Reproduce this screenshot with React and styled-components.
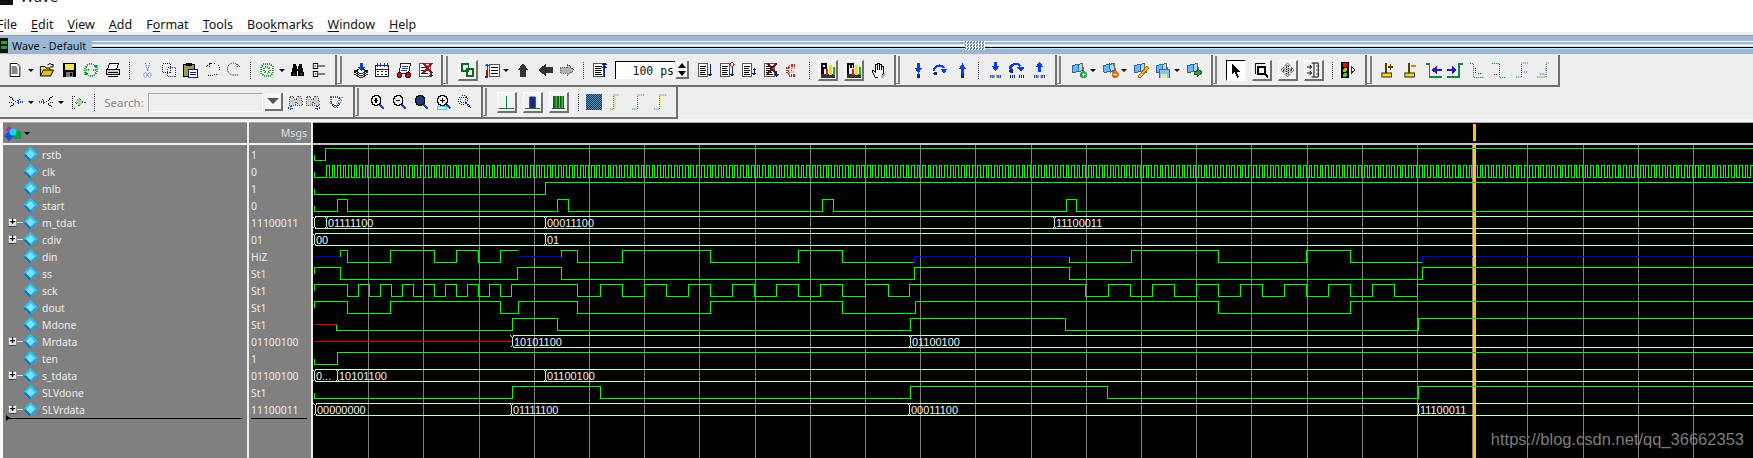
import React from 'react';
import styled, { createGlobalStyle } from 'styled-components';

const UI_FONT = '"Noto Sans", "Liberation Sans", sans-serif';

const GlobalStyle = createGlobalStyle`
  html, body {
    margin: 0;
    padding: 0;
    background: #fff;
    overflow: hidden;
  }
`;

const Page = styled.div`
  width: 1753px;
  height: 458px;
  overflow: hidden;
  display: flex;
  flex-direction: column;
  background: #fff;
  font-family: ${UI_FONT};
`;

const TitleBar = styled.div`
  height: 5px;
  flex: none;
  overflow: hidden;
  display: flex;
  align-items: flex-end;
  gap: 7px;
  font-size: 15px;
  line-height: 15px;
  color: #222;
`;

const TitleText = styled.span`
  margin-bottom: 1px;
`;

const MenuBar = styled.div`
  height: 27px;
  flex: none;
  display: flex;
  align-items: center;
  gap: 14px;
  margin-left: -3px;
  padding-top: 11px;
  box-sizing: border-box;
  font-size: 12.5px;
  color: #111;
  u { text-underline-offset: 2px; }
`;

const DockTitle = styled.div`
  height: 23px;
  flex: none;
  box-sizing: border-box;
  display: flex;
  align-items: center;
  position: relative;
  border-top: 3px solid #eeeeee;
  border-bottom: 1px solid #e8e8e8;
  background: #9ab8d6;
  font-size: 10.9px;
  color: #111;
  gap: 4px;
  box-shadow: inset 0 1px 0 #a0a0a0;
  padding-top: 1px;
`;

const Stripes = styled.div`
  flex: 1;
  height: 9px;
  margin-left: 2px;
  background: linear-gradient(
    to bottom,
    #fff 0 1px,
    #9ab8d6 1px 3px,
    #c6e2f4 3px 4px,
    #fff 4px 5px,
    #c6e2f4 5px 6px,
    #000 6px 7px,
    #c6e2f4 7px 8px,
    #9ab8d6 8px 9px
  );
`;

const DockHandle = styled.div`
  position: absolute;
  left: 965px;
  top: 6px;
  width: 20px;
  height: 9px;
  background: repeating-conic-gradient(#fff 0 25%, #5f7ea0 0 50%) 0 0 / 3px 3px;
`;

const ToolRow = styled.div`
  height: 32px;
  flex: none;
  display: flex;
  background: #eeeeee;
`;

const ToolGroup = styled.div`
  width: ${p => p.$width}px;
  height: 32px;
  flex: none;
  box-sizing: border-box;
  display: flex;
  align-items: center;
  border-right: 2px solid #707070;
  border-bottom: 2px solid #707070;
`;

const Slot = styled.div`
  flex: none;
  width: ${p => p.$w}px;
  margin-left: ${p => p.$ml}px;
  display: flex;
  align-items: center;
  justify-content: center;
  svg { display: block; }
`;

const RaisedBtn = styled.div`
  flex: none;
  width: 100%;
  height: 21px;
  box-sizing: border-box;
  display: flex;
  align-items: center;
  justify-content: center;
  background: ${p => (p.$on ? '#fff' : '#f2f2f2')};
  border-style: solid;
  border-width: 1px 2px 2px 1px;
  border-color: ${p => (p.$on ? '#000 #f8f8f8 #f8f8f8 #000' : '#fff #707070 #707070 #fff')};
`;

const Grip = styled.div`
  width: 2px;
  height: 28px;
  background: #808080;
  position: relative;
  &::after {
    content: '';
    position: absolute;
    left: -3px;
    bottom: 0;
    width: 3px;
    height: 1px;
    background: #808080;
  }
`;

const Sep = styled.div`
  width: 1px;
  height: 17px;
  background: repeating-linear-gradient(to bottom, #333 0 1px, transparent 1px 2px);
`;

const TimeInput = styled.div`
  width: 100%;
  height: 18px;
  box-sizing: border-box;
  background: #fff;
  border-top: 1px solid #000;
  border-left: 1px solid #000;
  font-family: "DejaVu Sans Mono", "Liberation Mono", monospace;
  font-size: 11.5px;
  line-height: 18px;
  text-align: right;
  padding-right: 1px;
  color: #111;
  white-space: pre;
`;

const Spin = styled.div`
  width: 100%;
  height: 18px;
  box-sizing: border-box;
  display: flex;
  flex-direction: column;
  border-right: 2px solid #707070;
  border-bottom: 2px solid #707070;
  background: #f4f4f4;
`;

const SpinPart = styled.div`
  flex: 1;
  display: flex;
  align-items: center;
  justify-content: center;
  &::before {
    content: '';
    border-left: 4px solid transparent;
    border-right: 4px solid transparent;
    ${p => (p.$up ? 'border-bottom: 5px solid #000;' : 'border-top: 5px solid #000;')}
  }
`;

const MiniArrow = styled.div`
  width: 0;
  height: 0;
  border-left: 3px solid transparent;
  border-right: 3px solid transparent;
  border-top: 3px solid ${p => p.$color || '#000'};
`;

const SearchLabel = styled.span`
  font-size: 11.5px;
  color: #8a8a8a;
  white-space: nowrap;
`;

const SearchBox = styled.div`
  width: 100%;
  height: 19px;
  box-sizing: border-box;
  background: #eeeeee;
  border: 1px solid #a8a8a8;
  border-right-color: #fff;
  border-bottom-color: #fff;
`;

const SearchDrop = styled.div`
  width: 100%;
  height: 18px;
  box-sizing: border-box;
  display: flex;
  align-items: center;
  justify-content: center;
  border-right: 2px solid #707070;
  border-bottom: 2px solid #707070;
  background: #f4f4f4;
  &::before {
    content: '';
    border-left: 6px solid transparent;
    border-right: 6px solid transparent;
    border-top: 6px solid #555;
  }
`;

const WhiteGap = styled.div`
  height: 3px;
  flex: none;
  background: #f4f4f4;
`;

const Panes = styled.div`
  flex: 1;
  min-height: 0;
  display: flex;
  padding-left: 3px;
  position: relative;
`;

const SignalPane = styled.div`
  flex: none;
  width: ${p => p.$width}px;
  display: flex;
  flex-direction: column;
  background: #808080;
  border-top: 1px solid #a8a8a8;
  box-sizing: border-box;
`;

const PaneHeader = styled.div`
  height: 20px;
  flex: none;
  display: flex;
  align-items: center;
  border-bottom: 2px solid #f2f2f2;
  box-sizing: content-box;
  color: #e0e0e0;
  font-size: 10.6px;
  justify-content: ${p => (p.$right ? 'flex-end' : 'flex-start')};
  padding: ${p => (p.$right ? '0 4px 0 0' : '0 0 0 1px')};
  gap: 3px;
`;

const RowList = styled.div`
  display: flex;
  flex-direction: column;
  padding-top: 1px;
`;

const SignalRow = styled.div`
  height: 17px;
  flex: none;
  display: flex;
  align-items: center;
  position: relative;
  font-size: 10.4px;
  color: #ececec;
  white-space: nowrap;
  padding-left: ${p => p.$pad || 0}px;
`;

const Expander = styled.div`
  position: absolute;
  left: 5px;
  top: 4px;
  width: 9px;
  height: 9px;
  box-sizing: border-box;
  background: linear-gradient(#fff, #cfd8ea);
  border: 1px solid #8d8d8d;
  border-bottom-color: #444;
  color: #000;
  font: bold 10px/7px "Liberation Mono", monospace;
  text-align: center;
  &::after {
    content: '';
    position: absolute;
    left: 8px;
    top: 3px;
    width: 6px;
    height: 1px;
    background: #ddd;
  }
`;

const NameText = styled.span`
  margin-left: 4px;
`;

const EndLine = styled.div`
  height: 1px;
  margin: ${p => (p.$name ? '0 5px 0 4px' : '0 4px 0 2px')};
  background: #000;
  position: relative;
  ${p => p.$name && `
    &::before {
      content: '';
      position: absolute;
      left: -1px;
      top: -3px;
      border-top: 3px solid transparent;
      border-bottom: 3px solid transparent;
      border-left: 4px solid #000;
    }
  `}
`;

const Sash = styled.div`
  flex: none;
  width: 2px;
  background: #ececec;
`;

const WaveColumn = styled.div`
  flex: 1;
  min-width: 0;
  display: flex;
  flex-direction: column;
  background: #000;
  position: relative;
`;

const WaveHeader = styled.div`
  height: 20px;
  flex: none;
  box-sizing: content-box;
  border-top: 1px solid #a8a8a8;
  border-bottom: 2px solid #c4c4c4;
  background: #000;
`;

const HeaderCursor = styled.div`
  position: absolute;
  left: 1160px;
  top: 2px;
  width: 3px;
  height: 17px;
  background: #ffc800;
`;

const Watermark = styled.div`
  position: absolute;
  right: 9px;
  bottom: 9px;
  font-family: "Liberation Sans", Arial, sans-serif;
  font-size: 16.5px;
  line-height: 20px;
  color: #7c7c7c;
`;

/* ---------- icons ---------- */

const D = { fill: 'none', strokeDasharray: '1 1' };
const listBox = (
  <>
    <rect x="1.5" y="1.5" width="9" height="13" fill="#fff" stroke="#555" />
    <path d="M3 4h6M3 6h5M3 8h6M3 10h5M3 12h6" stroke="#000" />
  </>
);
const Lens = ({ fill = 'none', glyph }) => (
  <>
    <path d="M9.5 9.5l5 5" stroke="#1a3fd0" strokeWidth="2.4" />
    <circle cx="6.5" cy="6.5" r="5" fill={fill} stroke="#000" strokeWidth="1.4" />
    {glyph}
  </>
);
const arrowDown = (c = '#0a3cf0') => <path d="M6 1h4v5h3l-5 6-5-6h3z" fill={c} />;
const arrowUp = (c = '#0a3cf0') => <path d="M8 1l5 6h-3v5H6V7H3z" fill={c} />;
const curve = (
  <>
    <path d="M2 9a5.5 5.5 0 0 1 10-3" fill="none" stroke="#0a3cf0" strokeWidth="2.4" />
    <path d="M8.5 7h7l-3.5 5z" fill="#0a3cf0" />
    <circle cx="3.5" cy="11.5" r="2" fill="#0a2a90" />
  </>
);
const bars = <path d="M2 13v3M4 13v3M6 13v3M10 13v3M12 13v3M14 13v3" stroke="#0a2a90" />;
const flag = (
  <>
    <path d="M1 4l6-2 1 7-6 2z" fill="#6fb4e8" stroke="#2a6aa8" />
    <path d="M7 3l4-2 1 7-4 2z" fill="#a9d8f4" stroke="#2a6aa8" />
    <path d="M11 1l2 10" stroke="#8a6a20" strokeWidth="1.4" />
  </>
);
const dotStep = (d, arrow) => (
  <>
    <path d={d} {...D} stroke="#0a8a30" />
    <path d={arrow} {...D} stroke="#3a10d0" />
  </>
);
const barChart = letter => (
  <>
    <rect x="1" y="12" width="16" height="4" fill="#333" />
    <rect x="6" y="7" width="3" height="6" fill="#e02020" />
    <rect x="10" y="3" width="3" height="10" fill="#f0e000" />
    <rect x="14" y="5" width="3" height="8" fill="#20b020" />
    {letter}
  </>
);
const waveBtn = (d, c, fill) => <path d={d} fill={fill || 'none'} stroke={c} />;

const icons = {
  doc: <><path d="M2.5 1.5h8l3 3v10h-11z" fill="#fff" stroke="#000" /><path d="M4 5h6M4 7h7M4 9h7M4 11h7" stroke="#000" /></>,
  open: <><path d="M1.5 14V4.5h5l1 1.5h4v2" fill="#f8e070" stroke="#000" /><path d="M1.5 14l3-6h11l-3 6z" fill="#e0c020" stroke="#000" /><path d="M9 3q3-3 5 0l1-1v3h-3" fill="none" stroke="#000" /></>,
  save: <><rect x="1" y="1" width="14" height="14" fill="#000" /><rect x="3" y="2" width="10" height="6" fill="#f0e060" /><rect x="4" y="10" width="8" height="5" fill="#777" /><rect x="9" y="11" width="2" height="3" fill="#000" /></>,
  reload: <><path d="M2 7a6 6 0 0 1 11-2l1-2v5h-5" {...D} stroke="#1a9a30" strokeWidth="2" /><path d="M14 9a6 6 0 0 1-11 2l-1 2V8h5" {...D} stroke="#1a9a30" strokeWidth="2" /></>,
  print: <><path d="M4.5 1.5h9l-2 6h-9z" fill="#fff" stroke="#000" /><path d="M1.5 7.5h13v5h-13z" fill="#ccc" stroke="#000" /><path d="M3 14.5h10M3 10h10" stroke="#000" /></>,
  cut: <><path d="M5 1l3 8M11 1L8 9" {...D} stroke="#2040c0" /><circle cx="5" cy="13" r="2.4" {...D} stroke="#2040c0" /><circle cx="11" cy="13" r="2.4" {...D} stroke="#2040c0" /></>,
  copy: <><rect x="1.5" y="1.5" width="8" height="9" {...D} stroke="#222" /><rect x="6.5" y="5.5" width="8" height="9" {...D} stroke="#2040c0" /></>,
  paste: <><rect x="1.5" y="2.5" width="11" height="12" fill="#9a9a50" stroke="#000" /><rect x="4" y="1" width="6" height="3" fill="#000" /><rect x="6.5" y="7.5" width="9" height="8" fill="#fff" stroke="#0a1a80" /><path d="M8 10h6M8 12h6" stroke="#0a1a80" /></>,
  undo: <><path d="M4 3a6 6 0 1 1 5 10H2" {...D} stroke="#111" /><path d="M1 5l3-3v4" {...D} stroke="#111" /></>,
  redo: <><path d="M12 3a6 6 0 1 0-5 10h7" {...D} stroke="#111" /><path d="M15 5l-3-3v4" {...D} stroke="#111" /></>,
  ring: <><circle cx="8" cy="8" r="6.5" {...D} stroke="#30a040" strokeWidth="2" /><circle cx="8" cy="8" r="3" {...D} stroke="#30a040" strokeWidth="2" /></>,
  binoc: <><path d="M3 2h3v2h1v3h2V4h1V2h3v3l2 7v2h-6V9H7v5H1v-2l2-7z" fill="#000" /><path d="M3 12h2M11 12h2" stroke="#88a" /></>,
  tree: <><rect x="1.5" y="1.5" width="5" height="5" fill="#fff" stroke="#000" /><rect x="1.5" y="9.5" width="5" height="5" fill="#fff" stroke="#000" /><path d="M3 4h2M3 12h2M7 4h8M7 12h8" stroke="#000" /></>,
  stack: <><path d="M1 10l7-4 7 4-7 4z" fill="#fff" stroke="#222" /><path d="M1 12l7 4 7-4M1 8l7 4 7-4" fill="none" stroke="#222" /><path d="M6.5 1h3v4H12l-4 4-4-4h2.5z" fill="#1040c0" /></>,
  table: <><rect x="1.5" y="3.5" width="13" height="11" fill="#fff" stroke="#222" /><path d="M1 7h14" stroke="#222" /><path d="M3 1v4M6 1v4M10 1v4M13 1v4" stroke="#1040c0" /><path d="M3 9h2M7 9h2M11 9h2M3 12h2M7 12h2M11 12h2" stroke="#222" /></>,
  scroll: <><path d="M4.5 1.5h10l-2 10h-9z" fill="#fff" stroke="#222" /><path d="M6 4h6M6 6h6M5 8h6" stroke="#2040c0" /><circle cx="3.5" cy="13" r="2.5" fill="#d01010" stroke="#000" /><circle cx="12" cy="13" r="2.5" fill="#d01010" stroke="#000" /></>,
  docX: <><rect x="1.5" y="1.5" width="11" height="13" fill="#fff" stroke="#555" /><path d="M3 5h7M3 8h7M3 11h7" stroke="#222" /><path d="M5 1l9 10M14 1L5 11" stroke="#a01010" strokeWidth="2" /><path d="M13 9v6M11 13l2 2 2-2" stroke="#1030b0" fill="none" /></>,
  chain: <><rect x="2" y="2" width="7" height="7" fill="none" stroke="#0a6a20" strokeWidth="2" /><rect x="7" y="7" width="7" height="7" fill="none" stroke="#0a6a20" strokeWidth="2" /></>,
  listUpDown: <><rect x="5.5" y="2.5" width="10" height="12" fill="#fff" stroke="#555" /><path d="M7 5h7M7 8h7M7 11h7" stroke="#000" /><path d="M3 1l2 3H1z" fill="#1040e0" /><path d="M3 4v4" stroke="#1040e0" /><path d="M3 8v7H1" fill="none" stroke="#a01010" strokeWidth="1.6" /></>,
  up: <path d="M8 1l6 7h-3v7H5V8H2z" fill="#333" />,
  left: <path d="M1 8l7-6v3h7v6H8v3z" fill="#333" />,
  rightD: <><path d="M15 8L8 2v3H1v6h7v3z" fill="#b0b0b0" /><path d="M15 8L8 2v3H1v6h7v3z" {...D} stroke="#666" /></>,
  listFork: <>{listBox}<path d="M12 1v14" stroke="#0a1a80" /><path d="M10 3l2-2 2 2M10 6l2-2 2 2" fill="#0a1a80" stroke="#0a1a80" /></>,
  listDown: <>{listBox}<path d="M13 2v11" stroke="#0a1a80" /><path d="M10.5 12h5l-2.5 3z" fill="#0a1a80" /></>,
  listDiamond: <>{listBox}<path d="M13 5v8" stroke="#0a1a80" /><path d="M10.5 12h5l-2.5 3z" fill="#0a1a80" /><path d="M13 0l2 2.5-2 2.5-2-2.5z" fill="#fff" stroke="#d02020" /></>,
  listSmall: <>{listBox}<path d="M13 6v5" stroke="#0a1a80" /><path d="M11 7l2 2 2-2M10.5 11h5l-2.5 3z" fill="#0a1a80" /></>,
  listX: <>{listBox}<path d="M4 1l9 11M13 1L4 12" stroke="#701010" strokeWidth="1.8" /><path d="M13 9v4" stroke="#0a1a80" /><path d="M10.5 12h5l-2.5 3z" fill="#0a1a80" /></>,
  redC: <><path d="M12 3H6L3 6v4l3 3h6" fill="none" stroke="#d02020" strokeWidth="3" strokeDasharray="1 1" /><path d="M12 6H8v4h4" fill="none" stroke="#d02020" strokeDasharray="1 1" /></>,
  pChart: barChart(<path d="M1 1h6v6H4v5H1zM3 3v2h2V3z" fill="#000" fillRule="evenodd" />),
  mChart: barChart(<path d="M1 1h8v5H7V3H6v3H4V3H3v9H1z" fill="#000" />),
  hand: <><path d="M5 15L2 9l1-1 2 2V2h2v6-7h2v7-6h2v6-4h2v8l-2 5z" fill="#fff" stroke="#000" /><path d="M10 15l5-5v3l-3 3z" fill="#aab" /></>,
  stepDown: <>{arrowDown()}<circle cx="8" cy="14" r="2" fill="#0a2a90" /></>,
  stepOver: curve,
  stepUp: <>{arrowUp()}<circle cx="8" cy="14" r="2" fill="#0a2a90" /></>,
  stepDownBars: <><path d="M6 0h4v4h3L8 9 3 4h3z" fill="#0a3cf0" />{bars}</>,
  stepOverBars: <><path d="M2 7a5 5 0 0 1 9-3" fill="none" stroke="#0a3cf0" strokeWidth="2.4" /><path d="M8 5h7l-3.5 5z" fill="#0a3cf0" /><circle cx="3" cy="9" r="2" fill="#0a2a90" />{bars}</>,
  stepUpBars: <><path d="M8 0l5 5h-3v5H6V5H3z" fill="#0a3cf0" />{bars}</>,
  flagPlus: <>{flag}<circle cx="12.5" cy="12.5" r="3.5" fill="#30a040" /><path d="M10.5 12.5h4M12.5 10.5v4" stroke="#fff" /></>,
  flagMinus: <>{flag}<circle cx="12.5" cy="12.5" r="3.5" fill="#e07020" /><path d="M10.5 12.5h4" stroke="#fff" /></>,
  flagEdit: <>{flag}<path d="M14 4l2 2-8 9-3 1 1-3z" fill="#e8c060" stroke="#a87010" /></>,
  flagSave: <>{flag}<rect x="4" y="7" width="10" height="9" fill="#8ac0f0" stroke="#2a6aa8" /><rect x="6" y="12" width="6" height="4" fill="#d8f0a0" /></>,
  flagGo: <>{flag}<path d="M8 9h3V6l5 4.5-5 4.5v-3H8z" fill="#40a040" stroke="#206020" /></>,
  pointer: <path d="M4 1v12l3-3 3 6 2-1-3-5h4z" fill="#000" />,
  boxZoom: <><path d="M1.5 12V1.5H12" fill="none" stroke="#000" /><rect x="4.5" y="4.5" width="7" height="7" fill="none" stroke="#000" strokeWidth="2" /><path d="M10 11l5 4" stroke="#000" strokeWidth="2" /></>,
  move: <path d="M8 1l3 3H5zM8 15l-3-3h6zM1 8l3-3v6zM15 8l-3 3V5zM7 4h2v8H7zM4 7h8v2H4z" {...D} stroke="#111" />,
  gridArrows: <><path d="M8.5 1v14M6 1h7v14H6" fill="none" stroke="#000" /><path d="M1 5h5M1 11h5M4 3l2 2-2 2M4 9l2 2-2 2" fill="none" stroke="#000" /><path d="M11 4h3M11 8h3M11 12h3" stroke="#000" strokeDasharray="1 1" /></>,
  traffic: <><rect x="0" y="0" width="8" height="16" fill="#000" /><circle cx="4" cy="3" r="2.5" fill="#f00" /><circle cx="4" cy="8" r="2" fill="#d8b000" /><circle cx="4" cy="13" r="2" fill="#40d040" /><path d="M10 4.5l4 3.5-4 3.5z" fill="#fff" stroke="#333" /></>,
  cursorAdd: <><path d="M6 1v10" stroke="#5a4000" strokeWidth="2" /><rect x="1" y="11" width="11" height="4" fill="#ffd800" stroke="#222" /><path d="M8 5h6M11 2v6" stroke="#5a4000" strokeWidth="1.4" /></>,
  cursorDel: <><path d="M6 1v10" stroke="#5a4000" strokeWidth="2" /><rect x="1" y="11" width="11" height="4" fill="#ffd800" stroke="#222" /><path d="M8 4h6" stroke="#c89000" strokeWidth="2" /></>,
  edgeLeft: <><path d="M1 2h3v13h12" fill="none" stroke="#0a8a40" strokeWidth="1.4" /><path d="M6 8l5-4v3h5v2h-5v3z" fill="#3a10d0" /></>,
  edgeRight: <><path d="M0 15h12V2h4" fill="none" stroke="#0a8a40" strokeWidth="1.4" /><path d="M10 8L5 4v3H0v2h5v3z" fill="#3a10d0" /></>,
  dotFall1: dotStep('M1 1h3v14h11', 'M6 6v6M9 11l3 1'),
  dotFall2: dotStep('M1 1h7v14h7', 'M8 6v4M3 12h4'),
  dotRise1: dotStep('M15 1H8v14H1', 'M8 6v5M11 10h3'),
  dotRise2: dotStep('M15 1h-3v14H1', 'M12 6v4M5 12h5'),
  findPrev: <><path d="M1 2l7 6-7 6M1 8h4" {...D} stroke="#111" /><path d="M15 8H9M12 5L9 8l3 3" {...D} stroke="#1040e0" strokeWidth="1.4" /></>,
  findNext: <><path d="M1 8h6M4 5l3 3-3 3" {...D} stroke="#1040e0" strokeWidth="1.4" /><path d="M15 2L8 8l7 6M15 8h-4" {...D} stroke="#111" /></>,
  findDiff: <><path d="M2 2h4M2 14h4M2 8h2M2 2v12" {...D} stroke="#111" /><path d="M9 4l4 4-4 4-4-4z" fill="#a8d8a0" strokeDasharray="1 1" stroke="#1a8a30" /><path d="M14 8h2" stroke="#1040e0" /></>,
  searchPrev: <><path d="M3 2h3l1 3h2l1-3h3l2 9h-5V8H8v3H2z" fill="#b8b8b8" fillOpacity="0.6" strokeDasharray="1 1" stroke="#555" /><path d="M1 14l3-2v4zM3 14h4" {...D} stroke="#1040e0" /></>,
  searchNext: <><path d="M3 2h3l1 3h2l1-3h3l2 9h-5V8H8v3H2z" fill="#b8b8b8" fillOpacity="0.6" strokeDasharray="1 1" stroke="#555" /><path d="M15 14l-3-2v4zM13 14H9" {...D} stroke="#1040e0" /></>,
  searchOpt: <><path d="M3 3h6l5 3-6 8-5-5z" {...D} stroke="#555" strokeWidth="2" /><path d="M14 3L6 14" {...D} stroke="#6a98e0" strokeWidth="2" /></>,
  zoomIn: <Lens glyph={<path d="M4 6.5h5M6.5 4v5" stroke="#000" strokeWidth="1.4" />} />,
  zoomOut: <Lens glyph={<path d="M4 6.5h5" stroke="#000" strokeWidth="1.4" />} />,
  zoomFull: <Lens fill="#123f78" />,
  zoomCursor: <><Lens glyph={<path d="M4 6.5h5M6.5 4v5" stroke="#000" strokeWidth="1.4" />} /><rect x="1" y="12.5" width="9" height="3" fill="none" stroke="#40d0e0" /></>,
  zoomDotted: <><circle cx="6" cy="6" r="4.5" {...D} stroke="#111" /><rect x="3.5" y="3.5" width="5" height="5" {...D} stroke="#1040c0" /><path d="M9 9l5 5" {...D} stroke="#1040e0" strokeWidth="2" /></>,
  waveLine: waveBtn('M0 14.5h16M8 2v12', '#0a7a30'),
  wavePulse: <><path d="M0 14.5h16" stroke="#0a7a30" /><path d="M5 14V3h6v11" fill="#1a2a8a" stroke="#1a2a8a" /></>,
  waveBlock: <><path d="M1 14.5h14" stroke="#063" /><path d="M2 14V2h12v12z" fill="#0a6a10" /><path d="M5.5 2v12M9 2v12M12 2v12" stroke="#7ac080" /></>,
  dither: (
    <>
      <defs>
        <pattern id="dither" width="2" height="2" patternUnits="userSpaceOnUse">
          <rect width="2" height="2" fill="#1a2a90" />
          <rect width="1" height="1" fill="#50a080" />
          <rect x="1" y="1" width="1" height="1" fill="#50a080" />
        </pattern>
      </defs>
      <rect width="16" height="16" fill="url(#dither)" />
    </>
  ),
  dotYellow: <><path d="M1 15h4V1h6" {...D} stroke="#0a8a30" /><path d="M5.5 1v14M7 1v14" stroke="#f0e000" strokeDasharray="1 1" /></>,
  dotGreen: <path d="M1 15h6V1h7" {...D} stroke="#0a8a30" />,
  dotYellow2: <><path d="M1 15h6V1h7" {...D} stroke="#0a8a30" /><path d="M7.5 2v12" stroke="#f0e000" strokeDasharray="2 1" /></>,
};

const Icon = ({ name, w, h = 16 }) => (
  <svg width={w} height={h} viewBox="0 0 16 16" preserveAspectRatio="none" shapeRendering="crispEdges">
    {icons[name]}
  </svg>
);

const renderItem = (it) => {
  const [kind, , w, arg] = it;
  switch (kind) {
    case 'grip': return <Grip />;
    case 'sep': return <Sep />;
    case 'drop': return <MiniArrow />;
    case 'time': return <TimeInput>100 ps</TimeInput>;
    case 'spin': return <Spin><SpinPart $up /><SpinPart /></Spin>;
    case 'label': return <SearchLabel>{arg}</SearchLabel>;
    case 'input': return <SearchBox />;
    case 'combo': return <SearchDrop />;
    case 'btn': return <RaisedBtn><Icon name={arg} w={w - 5} h={16} /></RaisedBtn>;
    case 'on': return <RaisedBtn $on><Icon name={arg} w={w - 5} h={16} /></RaisedBtn>;
    default: return <Icon name={kind} w={w} />;
  }
};

// [kind, left x on the toolbar, width, extra]
const toolRows = [
  [
    { end: 337, items: [
      ['doc', 8, 14], ['drop', 28, 6], ['open', 39, 15], ['save', 62, 15], ['reload', 83, 16], ['print', 105, 16],
      ['sep', 129, 1], ['cut', 142, 11], ['copy', 161, 16], ['paste', 182, 16], ['undo', 205, 16], ['redo', 226, 15],
      ['sep', 250, 1], ['ring', 259, 16], ['drop', 279, 6], ['binoc', 290, 15], ['tree', 312, 14],
    ] },
    { end: 443, items: [
      ['grip', 340, 2], ['stack', 353, 16], ['table', 374, 16], ['scroll', 396, 16], ['docX', 418, 16],
    ] },
    { end: 896, items: [
      ['grip', 446, 2], ['btn', 458, 20, 'chain'], ['listUpDown', 484, 16], ['drop', 503, 6], ['up', 516, 14], ['left', 537, 17], ['rightD', 559, 16],
      ['sep', 583, 1], ['listFork', 592, 17], ['time', 615, 60], ['spin', 676, 13],
      ['listDown', 697, 16], ['listDiamond', 719, 16], ['listSmall', 741, 16], ['listX', 763, 17], ['redC', 785, 13],
      ['sep', 809, 1], ['btn', 818, 20, 'pChart'], ['btn', 844, 20, 'mChart'], ['hand', 870, 16],
    ] },
    { end: 1057, items: [
      ['grip', 898, 2], ['stepDown', 913, 11], ['stepOver', 932, 16], ['stepUp', 957, 11], ['sep', 978, 1],
      ['stepDownBars', 989, 13], ['stepOverBars', 1008, 18], ['stepUpBars', 1033, 13],
    ] },
    { end: 1213, items: [
      ['grip', 1059, 2], ['flagPlus', 1071, 16], ['drop', 1090, 6], ['flagMinus', 1102, 17], ['drop', 1121, 6],
      ['flagEdit', 1133, 16], ['flagSave', 1155, 16], ['drop', 1174, 6], ['flagGo', 1186, 16],
    ] },
    { end: 1367, items: [
      ['grip', 1215, 2], ['on', 1226, 20, 'pointer'], ['btn', 1252, 20, 'boxZoom'], ['btn', 1278, 20, 'move'], ['btn', 1304, 20, 'gridArrows'],
      ['sep', 1332, 1], ['traffic', 1341, 16],
    ] },
    { end: 1560, items: [
      ['grip', 1370, 2], ['cursorAdd', 1381, 14], ['cursorDel', 1404, 14], ['edgeLeft', 1425, 17], ['edgeRight', 1447, 16],
      ['dotFall1', 1469, 16], ['dotFall2', 1491, 16], ['dotRise1', 1514, 15], ['dotRise2', 1535, 15],
    ] },
  ],
  [
    { end: 355, items: [
      ['findPrev', 8, 16], ['drop', 28, 6], ['findNext', 38, 16], ['drop', 58, 6], ['findDiff', 70, 16], ['sep', 94, 1],
      ['label', 105, 38, 'Search:'], ['input', 148, 115], ['combo', 265, 18], ['searchPrev', 287, 17], ['searchNext', 304, 17], ['searchOpt', 328, 16],
    ] },
    { end: 483, items: [
      ['grip', 357, 2], ['zoomIn', 370, 15], ['zoomOut', 392, 15], ['zoomFull', 414, 15], ['zoomCursor', 436, 16], ['zoomDotted', 457, 16],
    ] },
    { end: 678, items: [
      ['grip', 485, 2], ['btn', 497, 20, 'waveLine'], ['btn', 523, 20, 'wavePulse'], ['btn', 549, 20, 'waveBlock'], ['sep', 578, 1],
      ['dither', 586, 16], ['dotYellow', 609, 15], ['dotGreen', 631, 15], ['dotYellow2', 653, 15],
    ] },
  ],
];

const ToolBars = () => toolRows.map((groups, r) => {
  let start = 0;
  return (
    <ToolRow key={r}>
      {groups.map((g) => {
        let cursor = start;
        const width = g.end - start;
        start = g.end;
        return (
          <ToolGroup key={g.end} $width={width}>
            {g.items.map((it, i) => {
              const ml = it[1] - cursor;
              cursor = it[1] + it[2];
              return <Slot key={i} $w={it[2]} $ml={ml}>{renderItem(it)}</Slot>;
            })}
          </ToolGroup>
        );
      })}
    </ToolRow>
  );
});

/* ---------- signal data ---------- */

const signals = [
  { name: 'rstb', value: '1' },
  { name: 'clk', value: '0' },
  { name: 'mlb', value: '1' },
  { name: 'start', value: '0' },
  { name: 'm_tdat', value: '11100011', bus: true },
  { name: 'cdiv', value: '01', bus: true },
  { name: 'din', value: 'HiZ' },
  { name: 'ss', value: 'St1' },
  { name: 'sck', value: 'St1' },
  { name: 'dout', value: 'St1' },
  { name: 'Mdone', value: 'St1' },
  { name: 'Mrdata', value: '01100100', bus: true },
  { name: 'ten', value: '1' },
  { name: 's_tdata', value: '01100100', bus: true },
  { name: 'SLVdone', value: 'St1' },
  { name: 'SLVrdata', value: '11100011', bus: true },
];

const END = 1753;
const GREEN = '#00ff00';
const BUS = '#c4ffc4';
const rowY = i => 148 + 17 * i;

// digital rows: [level, x where that level ends]
const digital = {
  0: [['l', 325], ['h', END]],
  2: [['l', 545], ['h', END]],
  3: [['l', 337], ['h', 347], ['l', 557], ['h', 568], ['l', 822], ['h', 833], ['l', 1066], ['h', 1076], ['l', END]],
  6: [['z', 340], ['h', 347], ['l', 390], ['h', 434], ['l', 456], ['h', 478], ['l', 500], ['h', 517], ['z', 561], ['h', 577], ['l', 622], ['h', 710], ['l', 798], ['h', 842], ['l', 914], ['z', 1069], ['l', 1131], ['h', 1218], ['l', 1306], ['h', 1350], ['l', 1422], ['z', END]],
  7: [['h', 340], ['l', 517], ['h', 561], ['l', 914], ['h', 1069], ['l', 1422], ['h', END]],
  8: [['h', 347], ['l', 358], ['h', 369], ['l', 380], ['h', 391], ['l', 402], ['h', 413], ['l', 423], ['h', 434], ['l', 445], ['h', 456], ['l', 467], ['h', 478], ['l', 489], ['h', 500], ['l', 511], ['h', 577], ['l', 600], ['h', 622], ['l', 644], ['h', 666], ['l', 688], ['h', 710], ['l', 732], ['h', 754], ['l', 776], ['h', 798], ['l', 820], ['h', 842], ['l', 865], ['h', 888], ['l', 909], ['h', 1085], ['l', 1108], ['h', 1130], ['l', 1152], ['h', 1174], ['l', 1196], ['h', 1218], ['l', 1240], ['h', 1262], ['l', 1284], ['h', 1306], ['l', 1328], ['h', 1350], ['l', 1372], ['h', 1394], ['l', 1417], ['h', END]],
  9: [['h', 347], ['l', 390], ['h', 500], ['l', 518], ['h', 577], ['l', 710], ['h', 842], ['l', 915], ['h', 1218], ['l', 1350], ['h', END]],
  10: [['x', 336], ['l', 512], ['h', 557], ['l', 910], ['h', 1065], ['l', 1418], ['h', END]],
  12: [['l', 337], ['h', END]],
  14: [['l', 512], ['h', 600], ['l', 910], ['h', 1107], ['l', 1418], ['h', END]],
};

// bus rows: [x where the value starts, text]
const buses = {
  4: [[314, ''], [326, '01111100'], [545, '00011100'], [1054, '11100011']],
  5: [[314, '00'], [545, '01']],
  11: [[512, '10101100'], [910, '01100100']],
  13: [[314, '0...'], [337, '10101100'], [545, '01100100']],
  15: [[315, '00000000'], [511, '01111100'], [909, '00011100'], [1418, '11100011']],
};

const clockSegments = () => {
  const segs = [['l', 326]];
  let x = 326;
  let high = true;
  while (x < END) {
    x += 2.76;
    segs.push([high ? 'h' : 'l', Math.round(x)]);
    high = !high;
  }
  return segs;
};
digital[1] = clockSegments();

const levelY = (i, level) => {
  const top = rowY(i);
  if (level === 'h') return top;
  if (level === 'l') return top + 12;
  return top + 6;
};
const levelColor = (level) => {
  if (level === 'z') return '#0000f0';
  if (level === 'x') return '#f00000';
  return GREEN;
};

const DigitalWave = ({ row, segs }) => {
  let x0 = 314;
  let prevY = levelY(row, 'z');
  return segs.map(([level, xEnd], k) => {
    const y = levelY(row, level);
    const d = `M${x0 + 0.5} ${prevY + 0.5}V${y + 0.5}H${xEnd + 0.5}`;
    x0 = xEnd;
    prevY = y;
    return <path key={k} d={d} fill="none" stroke={levelColor(level)} />;
  });
};

const BusWave = ({ row, segs }) => {
  const top = rowY(row) + 0.5;
  const bot = top + 12;
  const first = segs[0][0];
  const lines = [`M${first + 1} ${top}H${END}`, `M${first + 1} ${bot}H${END}`];
  segs.forEach(([x]) => {
    lines.push(`M${x - 1.5} ${top}L${x + 0.5} ${top + 2}V${bot - 2}L${x - 1.5} ${bot}`);
    lines.push(`M${x + 2.5} ${top}L${x + 0.5} ${top + 2}M${x + 0.5} ${bot - 2}L${x + 2.5} ${bot}`);
  });
  return (
    <>
      <path d={lines.join('')} fill="none" stroke={BUS} />
      {segs.map(([x, label]) => (
        <text key={x} x={x + 2} y={top + 10} fill="#f4f4f4" fontSize="10.95" fontFamily='"Liberation Sans", Arial, sans-serif'>{label}</text>
      ))}
    </>
  );
};

const grid = Array.from({ length: 25 }, (_, k) => Math.round(313 + 55.2 * (k + 1)) + 0.5);
const crossings = [0, 2, 3, 6, 7, 8, 9, 10, 12, 14].map((r) => {
  const segs = digital[r];
  const level = segs.find(([, xEnd]) => xEnd > 1474)[0];
  return [levelY(r, level), level === 'z' ? '#ffd0a0' : '#e84000'];
});

const WaveChart = () => (
  <svg width="1440" height="313" viewBox="313 145 1440 313" shapeRendering="crispEdges" style={{ display: 'block' }}>
    {grid.map(x => <path key={x} d={`M${x} 145V458`} stroke="#808080" />)}
    {/* Mrdata is unknown until the first transfer */}
    <path d="M314 341.5H512" stroke="#e00000" />
    {Object.entries(digital).map(([r, segs]) => <DigitalWave key={r} row={+r} segs={segs} />)}
    {Object.entries(buses).map(([r, segs]) => <BusWave key={r} row={+r} segs={segs} />)}
    <rect x="1473" y="145" width="3" height="313" fill="#ffc800" />
    {crossings.map(([y, c]) => <rect key={y} x="1473" y={y} width="3" height="1" fill={c} />)}
  </svg>
);

const PaneGlyph = () => (
  <svg width="17" height="17" viewBox="0 0 17 17">
    <path d="M5 1l5 5H1z" fill="#c020c0" />
    <rect x="9" y="6" width="8" height="8" fill="#10a040" />
    <path d="M5 6l5 5-5 5-5-5z" fill="#1050e0" />
    <circle cx="9" cy="7" r="3.5" fill="#20d0f0" />
  </svg>
);

const Diamond = styled.svg`
  flex: none;
`;

const SignalDiamond = () => (
  <Diamond width="15" height="15" viewBox="0 0 15 15">
    <path d="M7.5 0L15 7.5 7.5 15 0 7.5z" fill="#1aa8ea" />
    <path d="M7.5 0L15 7.5H0z" fill="#2cc4f6" />
    <path d="M7.5 3l4.5 4.5-4.500 4.500L3 7.500z" fill="#7fe0ff" />
    <path d="M0 7.5L7.5 15V12L3 7.5z" fill="#0c78c0" />
  </Diamond>
);

export default function App() {
  return (
    <Page>
      <GlobalStyle />
      <TitleBar>
        <svg width="13" height="14" viewBox="0 0 13 14" style={{ flex: 'none' }}>
          <rect width="13" height="14" fill="#111" />
          <rect x="1" y="0" width="5" height="3" fill="#30a030" />
          <rect x="7" y="0" width="5" height="3" fill="#d02020" />
        </svg>
        <TitleText>Wave</TitleText>
      </TitleBar>
      <MenuBar>
        <span><u>F</u>ile</span>
        <span><u>E</u>dit</span>
        <span><u>V</u>iew</span>
        <span><u>A</u>dd</span>
        <span>F<u>o</u>rmat</span>
        <span><u>T</u>ools</span>
        <span>Boo<u>k</u>marks</span>
        <span><u>W</u>indow</span>
        <span><u>H</u>elp</span>
      </MenuBar>
      <DockTitle>
        <svg width="8" height="15" viewBox="0 0 8 15" style={{ flex: 'none' }}>
          <rect width="8" height="15" fill="#111" />
          <rect x="1" y="3" width="6" height="3" fill="#30a030" />
          <rect x="1" y="8" width="6" height="3" fill="#20a040" />
        </svg>
        <span>Wave - Default</span>
        <Stripes />
        <DockHandle />
      </DockTitle>
      <ToolBars />
      <WhiteGap />
      <Panes>
        <SignalPane $width={244}>
          <PaneHeader>
            <PaneGlyph />
            <MiniArrow />
          </PaneHeader>
          <RowList>
            {signals.map(s => (
              <SignalRow key={s.name} $pad={20}>
                {s.bus && <Expander>+</Expander>}
                <SignalDiamond />
                <NameText>{s.name}</NameText>
              </SignalRow>
            ))}
            <EndLine $name />
          </RowList>
        </SignalPane>
        <Sash />
        <SignalPane $width={62}>
          <PaneHeader $right>Msgs</PaneHeader>
          <RowList>
            {signals.map(s => (
              <SignalRow key={s.name} $pad={2}>{s.value}</SignalRow>
            ))}
            <EndLine />
          </RowList>
        </SignalPane>
        <Sash />
        <WaveColumn>
          <WaveHeader />
          <HeaderCursor />
          <WaveChart />
          <Watermark>https://blog.csdn.net/qq_36662353</Watermark>
        </WaveColumn>
      </Panes>
    </Page>
  );
}
